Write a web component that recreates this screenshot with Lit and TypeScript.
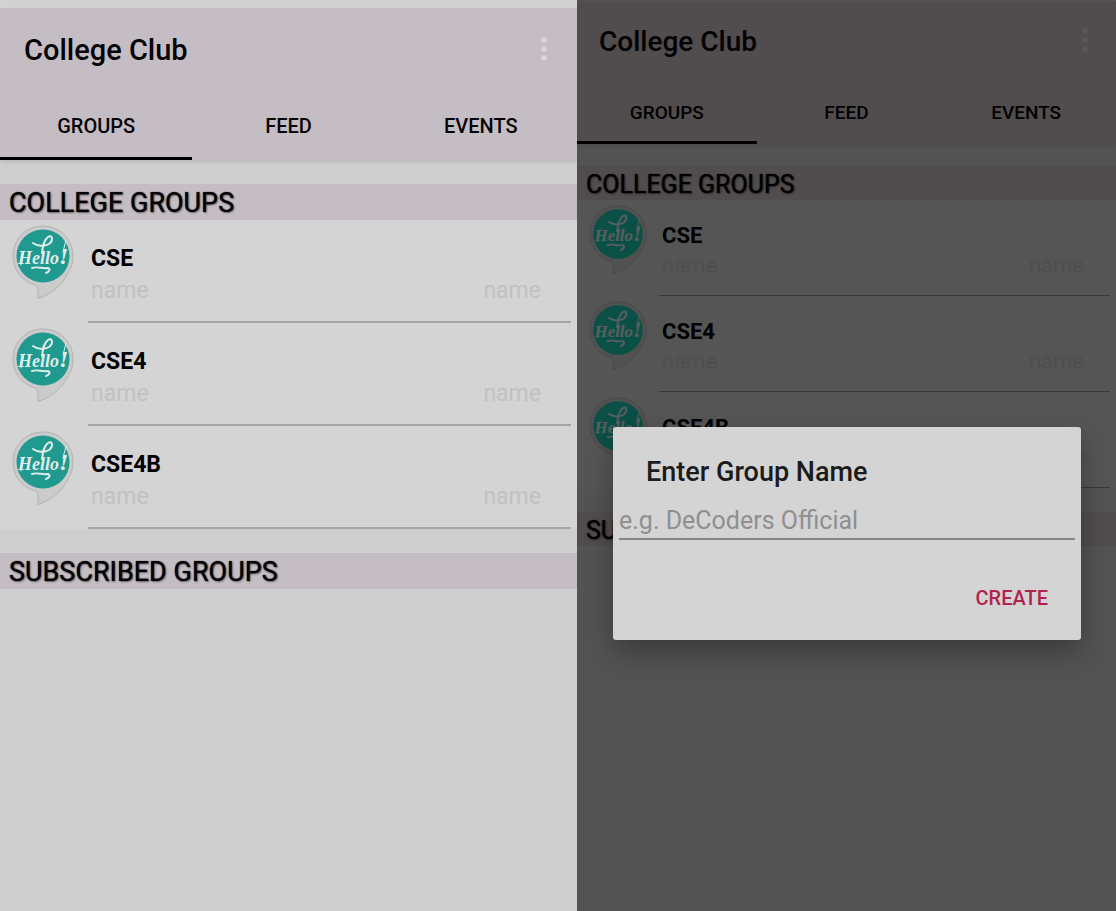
import { LitElement, html, css, svg } from "lit";
import { customElement, property, state } from "lit/decorators.js";
import { classMap } from "lit/directives/class-map.js";

interface Group {
  title: string;
  note: string;
  detail: string;
}

const GROUPS: Group[] = [
  { title: "CSE", note: "name", detail: "name" },
  { title: "CSE4", note: "name", detail: "name" },
  { title: "CSE4B", note: "name", detail: "name" },
];

const TABS = ["GROUPS", "FEED", "EVENTS"];

@customElement("hello-badge")
class HelloBadge extends LitElement {
  static styles = css`
    :host {
      display: block;
    }
    .badge {
      display: block;
      width: 100%;
    }
    .disc {
      fill: var(--teal);
    }
    .word {
      font: italic 700 18px "Liberation Serif", serif;
      fill: #dfecea;
    }
    .bang {
      font-size: 24px;
    }
    .swash {
      fill: none;
      stroke: #dfecea;
      stroke-linecap: round;
      stroke-width: 2px;
    }
    .thin {
      stroke-width: 1px;
    }
  `;

  render() {
    return html`
      <svg class="badge" viewBox="0 0 62 76" role="img" aria-label="Hello!">
        ${svg`
          <path d="M31 1C14 1 1 14 1 31C1 45 10 56 22 59.500C25 60.500 26 62 26 65V73.500C37 70 49 62 55 50C59 44 61 38 61 31C61 14 47.500 1 31 1Z"
            fill="#cbcbcb" stroke="#b4b2b3" stroke-width="1"/>
          <circle class="disc" cx="31" cy="31" r="26.500"/>
          <text class="word" x="6" y="39">Hello<tspan class="bang">!</tspan></text>
          <path class="swash" d="M21 18C25 21 32 22 37 19C42 15 40 9 36 12C32 15 31 20 30 28"/>
          <path class="swash" d="M20 43C25 41 30 44 36 43C39 44 37 47 34 48"/>
          <path class="swash thin" d="M9 40L12 26M54 15L51 27"/>
        `}
      </svg>
    `;
  }
}

@customElement("club-screen")
class ClubScreen extends LitElement {
  @property({ type: Boolean }) prompting = false;
  @state() private active = 0;

  static styles = css`
    :host {
      --strip: 8px;
      --bar: 84px;
      --tabs: 68px;
      --edge: 24px;
      --title: 29px;
      --tab: 20px;
      --heading: 27px;
      --heading-h: 36px;
      --row: 103px;
      --badge: 62px;
      --badge-col: 88px;
      --group: 23px;
      --group-line: 32px;
      --note: 23px;
      --note-color: #c3c0c2;
      --note-edge: 30px;
      --rule: 2px solid #a5a5a5;
      --list-end: 0;
      --bar-color: #c5bdc4;
      --teal: #20998e;
      display: block;
      position: relative;
      overflow: hidden;
      background: #cfcfcf;
      color: #060407;
      font-family: Roboto, sans-serif;
    }
    :host([prompting]) {
      --strip: 1px;
      --bar: 80px;
      --tabs: 63px;
      --edge: 22px;
      --title: 28px;
      --tab: 19px;
      --heading: 25px;
      --heading-h: 34px;
      --row: 96px;
      --badge: 58px;
      --badge-col: 82px;
      --group: 22px;
      --group-line: 30px;
      --note: 22px;
      --note-color: #c5c2c4;
      --note-edge: 26px;
      --rule: 1px solid #8f8f8f;
      --list-end: 2px;
      --bar-color: #cabdc4;
      --teal: #1cc8b2;
    }
    button {
      border: 0;
      padding: 0;
      background: none;
      color: inherit;
      font: inherit;
      cursor: pointer;
    }
    .strip {
      height: var(--strip);
      background: #d2d2d2;
    }
    .header {
      background: var(--bar-color);
      box-shadow: 0 2px 4px rgba(0, 0, 0, 0.1);
    }
    .bar {
      display: flex;
      align-items: center;
      justify-content: space-between;
      height: var(--bar);
      padding: 0 var(--edge);
    }
    .title {
      margin: 0;
      font-size: var(--title);
      font-weight: 500;
    }
    .more {
      display: flex;
      justify-content: center;
      width: 18px;
    }
    .dots {
      width: 6px;
      height: 26px;
      fill: #dcd6dc;
    }
    .tabs {
      display: grid;
      grid-template-columns: repeat(3, 1fr);
      height: var(--tabs);
    }
    .tabs .tab {
      font-size: var(--tab);
      font-weight: 500;
      border-top: 3px solid transparent;
      border-bottom: 3px solid transparent;
    }
    .tabs .selected {
      border-bottom-color: #000;
    }
    .heading {
      margin: 24px 0 0;
      padding-left: 9px;
      height: var(--heading-h);
      line-height: calc(var(--heading-h) + 3px);
      background: var(--bar-color);
      font-size: var(--heading);
      font-weight: 400;
      text-shadow: 0 0 1px #060407, 1px 1px 2px rgba(0, 0, 0, 0.45);
    }
    .compact {
      margin-top: 22px;
    }
    .list {
      margin: 0;
      padding: 0 0 var(--list-end);
      list-style: none;
      background: #d4d4d4;
    }
    .row {
      display: grid;
      grid-template-columns: var(--badge-col) 1fr;
      height: var(--row);
    }
    .icon {
      width: var(--badge);
      margin: 5px 0 0 12px;
    }
    .body {
      display: flex;
      flex-direction: column;
      justify-content: flex-end;
      margin-right: 6px;
      padding: 0 var(--note-edge) 14px 3px;
      border-bottom: var(--rule);
    }
    .group {
      margin: 0;
      font-size: var(--group);
      line-height: var(--group-line);
      font-weight: 700;
      color: #000;
    }
    .notes {
      display: flex;
      justify-content: space-between;
      font-size: var(--note);
      line-height: var(--group-line);
      color: var(--note-color);
    }
    .scrim {
      position: absolute;
      inset: 0;
      display: grid;
      align-content: center;
      padding: 156px 35px 0 36px;
      background: rgba(0, 0, 0, 0.6);
    }
    .dialog {
      display: flex;
      flex-direction: column;
      padding: 26px 6px 22px;
      border-radius: 3px;
      background: #d4d4d4;
      box-shadow: 0 12px 28px rgba(0, 0, 0, 0.3);
    }
    .question {
      padding-left: 27px;
      font-size: 27px;
      line-height: 38px;
      font-weight: 500;
      color: #1b1b1b;
    }
    .field {
      width: 100%;
      box-sizing: border-box;
      height: 49px;
      margin: 0;
      padding: 12px 0 0;
      border: 0;
      border-bottom: 2px solid #858585;
      border-radius: 0;
      outline: 0;
      background: none;
      color: #1b1b1b;
      font: 25px Roboto, sans-serif;
    }
    .field::placeholder {
      color: #8f8f8f;
      opacity: 1;
    }
    .actions {
      display: flex;
      justify-content: flex-end;
      padding: 38px 27px 0 0;
    }
    .actions .create {
      height: 40px;
      color: #b3214f;
      font-size: 20px;
      font-weight: 500;
    }
  `;

  private heading(text: string) {
    return html`<h2 class=${classMap({ heading: true, compact: this.prompting })}>${text}</h2>`;
  }

  render() {
    return html`
      <div class="strip"></div>
      <header class="header">
        <div class="bar">
          <h1 class="title">College Club</h1>
          <button class="more" aria-label="More options">
            <svg class="dots" viewBox="0 0 6 26">
              <circle cx="3" cy="3" r="2.700" />
              <circle cx="3" cy="12" r="2.700" />
              <circle cx="3" cy="21" r="2.700" />
            </svg>
          </button>
        </div>
        <div class="tabs" role="tablist">
          ${TABS.map(
            (name, i) => html`
              <button
                role="tab"
                aria-selected=${i === this.active ? "true" : "false"}
                class=${classMap({ tab: true, selected: i === this.active })}
                @click=${() => (this.active = i)}
              >${name}</button>
            `
          )}
        </div>
      </header>
      ${this.heading("COLLEGE GROUPS")}
      <ul class="list">
        ${GROUPS.map(
          (g) => html`
            <li class="row">
              <hello-badge class="icon"></hello-badge>
              <div class="body">
                <h3 class="group">${g.title}</h3>
                <div class="notes"><span>${g.note}</span><span>${g.detail}</span></div>
              </div>
            </li>
          `
        )}
      </ul>
      ${this.heading("SUBSCRIBED GROUPS")}
      ${this.prompting
        ? html`
            <div class="scrim">
              <form class="dialog" role="dialog" aria-modal="true" @submit=${(e: Event) => e.preventDefault()}>
                <label class="question" for="group-name">Enter Group Name</label>
                <input class="field" id="group-name" type="text" placeholder="e.g. DeCoders Official" />
                <div class="actions"><button class="create" type="submit">CREATE</button></div>
              </form>
            </div>
          `
        : null}
    `;
  }
}

@customElement("app-root")
class AppRoot extends LitElement {
  static styles = css`
    :host {
      display: grid;
      grid-template-columns: 577fr 539fr;
      min-height: 100vh;
    }
  `;

  render() {
    return html`
      <club-screen></club-screen>
      <club-screen prompting></club-screen>
    `;
  }
}
